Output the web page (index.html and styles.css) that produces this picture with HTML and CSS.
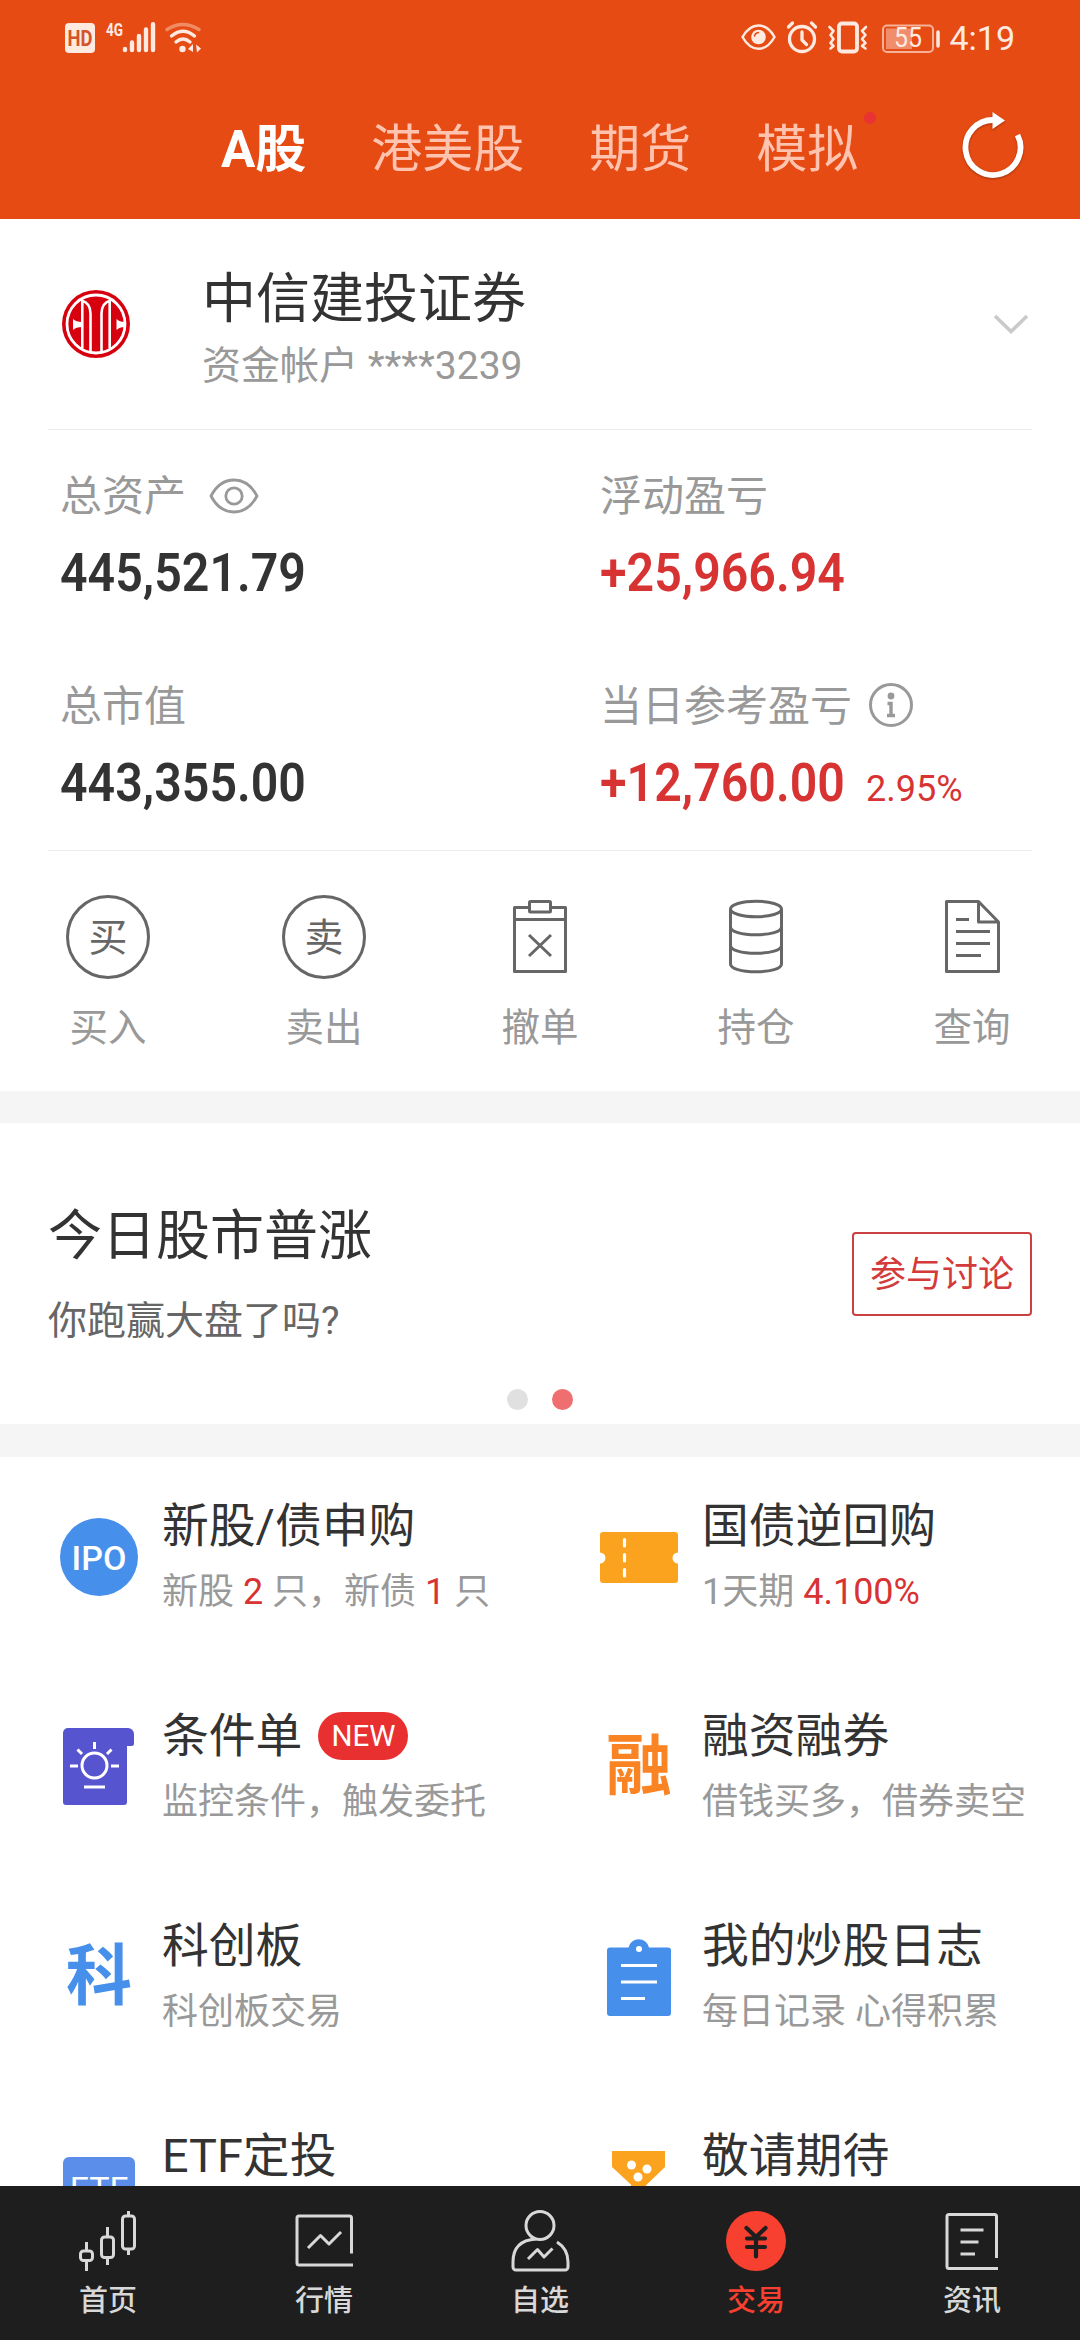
FILE: index.html
```html
<!DOCTYPE html>
<html lang="zh-CN">
<head>
<meta charset="utf-8">
<title>交易</title>
<link rel="stylesheet" href="styles.css">
</head>
<body>
<div class="app">
  <header class="header">
    <div class="status">
      <svg class="status-left" width="140" height="34" viewBox="0 0 140 34">
        <rect x="0" y="3" width="30" height="30" rx="4" fill="#ffeae2"/>
        <text x="15" y="25.5" class="hd-text" textLength="25" lengthAdjust="spacingAndGlyphs">HD</text>
        <text x="41" y="16" class="net-text" textLength="17" lengthAdjust="spacingAndGlyphs">4G</text>
        <g stroke="#ffeae2" stroke-width="4.4" stroke-linecap="round">
          <path d="M60 29v1M67 22.5v7.500M74 16v14M81 9.500v20.500M88 4.300v25.700"/>
        </g>
        <g fill="none" stroke="#ffeae2" stroke-width="3.400" stroke-linecap="round">
          <path d="M102 9.500q15.500-10 32 0" stroke-opacity=".4"/>
          <path d="M106.500 16q11.500-9.500 23 0"/>
          <path d="M111 22q7-6 14 0"/>
        </g>
        <circle cx="117.500" cy="29" r="3.200" fill="#ffeae2"/>
        <path d="M123 29l5-5v8zM131 24.500l5 4-4 4z" fill="#ffeae2"/>
      </svg>
      <div class="status-right">
        <svg width="200" height="34" viewBox="0 0 200 34" fill="none" stroke="#ffeae2" stroke-linecap="round" stroke-linejoin="round">
          <path d="M1.500 17C6 9 11.500 5.500 17.500 5.500S29 9 33.500 17C29 25 23.500 28.800 17.500 28.800S6 25 1.500 17z" stroke-width="2.500"/>
          <circle cx="17.500" cy="17" r="7.300" fill="#ffeae2" stroke="none"/>
          <path d="M13.500 16q.5-3 4-3.500" stroke="#e64b13" stroke-width="1.500"/>
          <circle cx="61" cy="19" r="12.500" stroke-width="3.300"/>
          <path d="M61 12v8l4.500 4.500M47.500 7l4-4M74.500 7l-4-4" stroke-width="3.300"/>
          <rect x="98" y="3.500" width="18" height="28" rx="3" stroke-width="3.800"/>
          <path d="M88.500 7l4 4-3 4 3 4-3 4 3 3-3 2.500M125 7l-4 4 3.500 4-3.500 4 3.500 4-3.500 3 3.500 2.500" stroke-width="2.600"/>
          <rect x="142" y="5.500" width="50" height="26.500" rx="4" stroke-opacity=".65" stroke-width="2"/>
          <rect x="145" y="8.500" width="26" height="20.500" fill="#ffeae2" fill-opacity=".42" stroke="none"/>
          <text x="167" y="27" class="battery-text" textLength="28" lengthAdjust="spacingAndGlyphs">55</text>
          <path d="M197 12v14" stroke-width="3.500"/>
        </svg>
        <span class="clock">4:19</span>
      </div>
    </div>
    <div class="tabs">
      <span class="tab active">A股</span>
      <span class="tab">港美股</span>
      <span class="tab">期货</span>
      <span class="tab">模拟<i class="tab-dot"></i></span>
      <svg class="refresh" width="64" height="72" viewBox="0 0 64 72">
        <path d="M33 11A27.500 27.500 0 1 0 56.500 26" fill="none" stroke="#fff" stroke-width="5.800"/>
        <path d="M31.500 3l12.500 8.500-12.500 8.500z" fill="#fff"/>
      </svg>
    </div>
  </header>

  <main class="content">
    <section class="account">
      <svg class="logo" width="68" height="68" viewBox="0 0 68 68">
        <circle cx="34" cy="34" r="34" fill="#d7000f"/>
        <circle cx="34" cy="34" r="29" fill="none" stroke="#fff" stroke-width="2.800"/>
        <path d="M20.300 10v48M47.700 10v48M19.500 10.500q9 2.500 9 13V62M48.500 10.500q-9 2.500-9 13V62" fill="none" stroke="#fff" stroke-width="2.600"/>
        <path d="M11 29q3 3 9 3v5q-6 0-9 3zM54.500 29q3 3 8 3v5q-5 0-8 3z" fill="#fff"/>
      </svg>
      <div class="account-text">
        <div class="broker">中信建投证券</div>
        <div class="account-no">资金帐户 ****3239</div>
      </div>
      <svg class="chevron" width="36" height="22" viewBox="0 0 36 22"><path d="M2 3l16 15.500L34 3" fill="none" stroke="#c9c9c9" stroke-width="3.600"/></svg>
    </section>

    <section class="assets">
      <div class="asset">
        <div class="label">总资产
          <svg class="eye" width="50" height="38" viewBox="0 0 50 38" fill="none" stroke="#999" stroke-width="2.800"><path d="M2 19C8 7.500 16 3 25 3s17 4.500 23 16C42 30.500 34 35 25 35S8 30.500 2 19z"/><circle cx="25" cy="19" r="8.200"/></svg>
        </div>
        <div class="figure"><span class="din">445,521.79</span></div>
      </div>
      <div class="asset">
        <div class="label">浮动盈亏</div>
        <div class="figure up"><span class="din">+25,966.94</span></div>
      </div>
      <div class="asset">
        <div class="label">总市值</div>
        <div class="figure"><span class="din">443,355.00</span></div>
      </div>
      <div class="asset">
        <div class="label">当日参考盈亏
          <svg class="info" width="44" height="44" viewBox="0 0 44 44"><circle cx="22" cy="22" r="20.500" fill="none" stroke="#999" stroke-width="3"/><circle cx="22" cy="13" r="3.400" fill="#999"/><path d="M18.500 20.500H22V32M18 32.500h8" fill="none" stroke="#999" stroke-width="3.400"/></svg>
        </div>
        <div class="figure up"><span class="din">+12,760.00</span><span class="rate">2.95%</span></div>
      </div>
    </section>

    <section class="actions">
      <div class="action"><span class="ring">买</span><span>买入</span></div>
      <div class="action"><span class="ring">卖</span><span>卖出</span></div>
      <div class="action">
        <svg width="84" height="84" viewBox="0 0 84 84" fill="none" stroke="#666" stroke-width="3" stroke-linejoin="round"><path d="M31 12.500H16.500v64h51v-64H53M16.500 24.500h51"/><rect x="31.500" y="6.500" width="21" height="10.500" rx="1"/><path d="M31 40l22 21M53 40L31 61"/></svg>
        <span>撤单</span></div>
      <div class="action">
        <svg width="84" height="84" viewBox="0 0 84 84" fill="none" stroke="#666" stroke-width="3"><ellipse cx="42" cy="14" rx="25.500" ry="7.800"/><path d="M16.500 14v55c0 4.500 11 7.800 25.500 7.800S67.500 73.500 67.500 69V14M16.500 32c0 4.500 11 7.800 25.500 7.800S67.500 36.500 67.500 32M16.500 50.500c0 4.500 11 7.800 25.500 7.800s25.500-3.300 25.500-7.800"/></svg>
        <span>持仓</span></div>
      <div class="action">
        <svg width="84" height="84" viewBox="0 0 84 84" fill="none" stroke="#666" stroke-width="3" stroke-linejoin="round"><path d="M48.500 6.500h-32v70h52V27zM48.500 6.500V27h20M26 24.500h13M26 36.500h34M26 48.500h34M26 60.500h25"/></svg>
        <span>查询</span></div>
    </section>

    <section class="topic">
      <div class="topic-row">
        <div>
          <div class="topic-title">今日股市普涨</div>
          <div class="topic-sub">你跑赢大盘了吗?</div>
        </div>
        <span class="join">参与讨论</span>
      </div>
      <div class="dots"><i></i><i class="on"></i></div>
    </section>

    <section class="services">
      <div class="service">
        <span class="icon"><span class="ipo">IPO</span></span>
        <div><div class="name">新股/债申购</div><div class="desc">新股 <em>2</em> 只，新债 <em>1</em> 只</div></div>
      </div>
      <div class="service">
        <svg class="icon" width="78" height="78" viewBox="0 0 78 78"><path d="M3 14h72a3 3 0 0 1 3 3v17.500a5.500 5.500 0 0 0 0 11V62a3 3 0 0 1-3 3H3a3 3 0 0 1-3-3V45.500a5.500 5.500 0 0 0 0-11V17a3 3 0 0 1 3-3z" fill="#fba21e"/><path d="M24.500 21.500v6.500M24.500 36.500v6.500M24.500 51.500v6.500" stroke="#fff" stroke-width="3.200" stroke-linecap="round"/></svg>
        <div><div class="name">国债逆回购</div><div class="desc">1天期 <em>4.100%</em></div></div>
      </div>
      <div class="service">
        <svg class="icon" width="78" height="78" viewBox="0 0 78 78"><path d="M8 0h60a6 6 0 0 1 6 6v9.500a2.500 2.500 0 0 1-2.500 2.500H67v56a3 3 0 0 1-3 3H6a3 3 0 0 1-3-3V5a5 5 0 0 1 5-5z" fill="#5754d0"/><g fill="none" stroke="#fff" stroke-width="3"><circle cx="34.500" cy="37.500" r="12.500"/><path d="M34.500 14v7M17.500 21.500l4.500 4.500M51.500 21.500L47 26M10 38h8M51 38h8M24 59h21"/></g></svg>
        <div><div class="name">条件单<span class="badge">NEW</span></div><div class="desc">监控条件，触发委托</div></div>
      </div>
      <div class="service">
        <span class="icon glyph orange">融</span>
        <div><div class="name">融资融券</div><div class="desc">借钱买多，借券卖空</div></div>
      </div>
      <div class="service">
        <span class="icon glyph blue">科</span>
        <div><div class="name">科创板</div><div class="desc">科创板交易</div></div>
      </div>
      <div class="service">
        <svg class="icon" width="78" height="78" viewBox="0 0 78 78"><path d="M10 9.500h18.500a10.500 10.500 0 0 1 20.500 0h19a3 3 0 0 1 3 3V75a3 3 0 0 1-3 3H10a3 3 0 0 1-3-3V12.500a3 3 0 0 1 3-3z" fill="#4690ec"/><circle cx="39" cy="11" r="3" fill="#fff"/><path d="M21 27.500h36M21 44h36M21 60.500h24" stroke="#fff" stroke-width="3"/></svg>
        <div><div class="name">我的炒股日志</div><div class="desc">每日记录 心得积累</div></div>
      </div>
      <div class="service">
        <span class="icon"><span class="etf">ETF</span></span>
        <div class="name">ETF定投</div>
      </div>
      <div class="service">
        <svg class="icon" width="78" height="78" viewBox="0 0 78 78"><path d="M12 3h53v16L39 44 12 19z" fill="#fba21e"/><path d="M31 36h15v36H31z" fill="#fba21e"/><circle cx="31.500" cy="17" r="4.500" fill="#fff"/><circle cx="47" cy="21" r="4.500" fill="#fff"/><circle cx="38" cy="29" r="4.500" fill="#fff"/></svg>
        <div class="name">敬请期待</div>
      </div>
    </section>
  </main>

  <nav class="nav">
    <div class="nav-item">
      <svg width="64" height="62" viewBox="0 0 64 62" fill="none" stroke="#d8d8d8" stroke-width="3"><rect x="4.500" y="41" width="12" height="9.500" rx="3"/><rect x="25.500" y="27" width="12" height="20.500" rx="3"/><rect x="46.500" y="6" width="12" height="33" rx="3"/><path d="M10.500 32v9M10.500 50.500V61M31.500 17v10M31.500 47.500V55M52.500 1v5M52.500 39v6"/></svg>
      <span>首页</span></div>
    <div class="nav-item">
      <svg width="64" height="62" viewBox="0 0 64 62" fill="none" stroke="#d8d8d8" stroke-width="3" stroke-linejoin="round"><path d="M59.500 43.500V8a2 2 0 0 0-2-2H7a2 2 0 0 0-2 2v45a2 2 0 0 0 2 2h54M16 38l12.500-12.500 8.500 8.500L49 22"/></svg>
      <span>行情</span></div>
    <div class="nav-item">
      <svg width="64" height="62" viewBox="0 0 64 62" fill="none" stroke="#d8d8d8" stroke-width="3" stroke-linejoin="round"><circle cx="32" cy="15.500" r="14"/><path d="M28 29C12 30 5 38 5 52v5a3 3 0 0 0 3 3h49a3 3 0 0 0 3-3v-5c0-8-3-15-11-20M20 49l9.500-9.500L36 47l8.500-8.500"/></svg>
      <span>自选</span></div>
    <div class="nav-item on">
      <svg width="64" height="62" viewBox="0 0 64 62"><circle cx="32" cy="31" r="30" fill="#f7402f"/><path d="M22.500 18L32 27l9.500-9M23 28.500h18M23 37h18M32 28v18.500" fill="none" stroke="#1e1e1e" stroke-width="4.200" stroke-linecap="round"/></svg>
      <span>交易</span></div>
    <div class="nav-item">
      <svg width="64" height="62" viewBox="0 0 64 62" fill="none" stroke="#d8d8d8" stroke-width="3"><path d="M56.500 48V6.500a2 2 0 0 0-2-2H9a2 2 0 0 0-2 2v50a2 2 0 0 0 2 2h49M20.500 20h23M20.500 32h18M20.500 44H35"/></svg>
      <span>资讯</span></div>
  </nav>
</div>
</body>
</html>
```
FILE: styles.css
```css
* { box-sizing: border-box; }

body {
  margin: 0;
  background: #fff;
  color: #333;
  font-family: Roboto, "Noto Sans CJK SC", sans-serif;
}

svg { display: block; flex: none; }

.app {
  display: flex;
  flex-direction: column;
  width: 1080px;
  height: 2340px;
  overflow: hidden;
}

/* header */
.header { height: 219px; background: #e64b13; flex: none; }

.status {
  display: flex;
  justify-content: space-between;
  height: 76px;
  padding: 20px 65px 0 65px;
}
.status-right { display: flex; gap: 8px; }
.clock { font-size: 34px; line-height: 36px; color: #ffeae2; }
.hd-text { font: 700 22px Roboto, sans-serif; text-anchor: middle; fill: #d2552a; }
.net-text { font: 700 18px Roboto, sans-serif; fill: #ffeae2; }
.battery-text { font: 400 27px Roboto, sans-serif; text-anchor: middle; fill: #ffeae2; stroke: none; }

.tabs {
  display: flex;
  gap: 65px;
  align-items: center;
  height: 148px;
  padding-left: 221px;
}
.tab { position: relative; font-size: 51px; line-height: 60px; color: #ffc3b0; white-space: nowrap; }
.tab.active { color: #fff; font-weight: 700; }
.tab-dot {
  position: absolute;
  top: -8px;
  right: -18px;
  width: 12px;
  height: 12px;
  border-radius: 50%;
  background: #e83234;
}
.refresh { margin: 0 0 10px 38px; filter: drop-shadow(0 1px 1px rgba(80, 20, 0, .45)); }

/* scrollable content */
.content { flex: 1; min-height: 0; overflow: hidden; }

.account {
  display: flex;
  align-items: center;
  height: 211px;
  margin: 0 48px;
  padding: 0 3px 0 14px;
  border-bottom: 1px solid #e9e9e9;
}
.account-text { flex: 1; padding: 8px 0 0 72px; }
.broker { font-size: 54px; line-height: 68px; }
.account-no { font-size: 39px; line-height: 48px; color: #999; margin-top: 8px; }

.assets {
  display: grid;
  grid-template-columns: 540px 540px;
  grid-template-rows: 210px 210px;
}
.assets::after {
  content: "";
  grid-column: 1 / -1;
  height: 1px;
  margin: 0 48px;
  background: #ececec;
}
.asset { padding: 46px 0 0 60px; }
.label { display: flex; align-items: center; height: 42px; font-size: 42px; line-height: 42px; color: #999; }
.eye { margin: -3px 0 0 23px; }
.info { margin: -5px 0 0 17px; }
.figure { display: flex; align-items: baseline; margin-top: 28px; font-size: 54px; line-height: 54px; }
.din { width: 246px; font-weight: 600; transform: scaleX(.895); transform-origin: 0 50%; white-space: nowrap; }
.up { color: #d83333; }
.rate { margin-left: 20px; font-size: 36px; }

.actions {
  display: grid;
  grid-template-columns: repeat(5, 216px);
  height: 240px;
  padding-top: 44px;
}
.action { display: flex; flex-direction: column; align-items: center; gap: 26px; font-size: 38.500px; line-height: 46px; color: #999; }
.ring {
  width: 84px;
  height: 84px;
  border: 3px solid #666;
  border-radius: 50%;
  font-size: 39px;
  line-height: 80px;
  text-align: center;
  color: #666;
}

.topic {
  height: 366px;
  border-top: 32px solid #f5f5f5;
  border-bottom: 33px solid #f5f5f5;
  padding: 80px 48px 0;
}
.topic-row { display: flex; justify-content: space-between; align-items: center; }
.topic-title { font-size: 54px; line-height: 68px; }
.topic-sub { margin: 20px 0 4px; font-size: 39px; line-height: 60px; color: #666; }
.join {
  width: 180px;
  height: 84px;
  margin-top: -10px;
  border: 2px solid #cb4040;
  border-radius: 4px;
  font-size: 36px;
  line-height: 83px;
  text-align: center;
  color: #d33a3a;
}
.dots { display: flex; justify-content: center; gap: 24px; margin-top: 34px; }
.dots i { width: 21px; height: 21px; border-radius: 50%; background: #e0e0e0; }
.dots .on { background: #ef6e70; }

.services { display: grid; grid-template-columns: 540px 540px; grid-auto-rows: 210px; }
.service { display: flex; padding: 40px 0 0 60px; }
.icon { flex: none; width: 78px; height: 78px; margin: 21px 24px 0 0; }
.name { display: flex; align-items: center; height: 58px; font-size: 46.800px; line-height: 58px; white-space: nowrap; }
.desc { margin-top: 12px; font-size: 36px; line-height: 50px; color: #999; white-space: nowrap; }
.desc em { font-style: normal; color: #d83333; }
.badge {
  height: 48px;
  margin-left: 16px;
  padding: 0 13px;
  border-radius: 24px;
  background: #e93030;
  color: #fff;
  font-size: 29.500px;
  line-height: 48px;
}
.ipo {
  display: block;
  height: 78px;
  border-radius: 50%;
  background: #468fea;
  color: #fff;
  font-size: 34px;
  font-weight: 500;
  line-height: 80px;
  text-align: center;
}
.glyph { font-family: "Noto Sans CJK SC", sans-serif; font-size: 66px; font-weight: 700; line-height: 64px; text-align: center; }
.orange { color: #fa8423; }
.blue { color: #4690ec; }
.etf {
  display: block;
  width: 72px;
  height: 60px;
  margin: 9px 0 0 3px;
  border-radius: 6px;
  background: #5b8eea;
  color: #fff;
  font-size: 34px;
  line-height: 64px;
  text-align: center;
}

/* bottom navigation */
.nav {
  display: grid;
  grid-template-columns: repeat(5, 216px);
  flex: none;
  height: 154px;
  padding-top: 24px;
  background: #1e1e1e;
}
.nav-item { display: flex; flex-direction: column; align-items: center; gap: 10px; font-size: 29px; font-weight: 500; line-height: 38px; color: #d8d8d8; }
.nav-item.on { color: #f7402f; }
```
